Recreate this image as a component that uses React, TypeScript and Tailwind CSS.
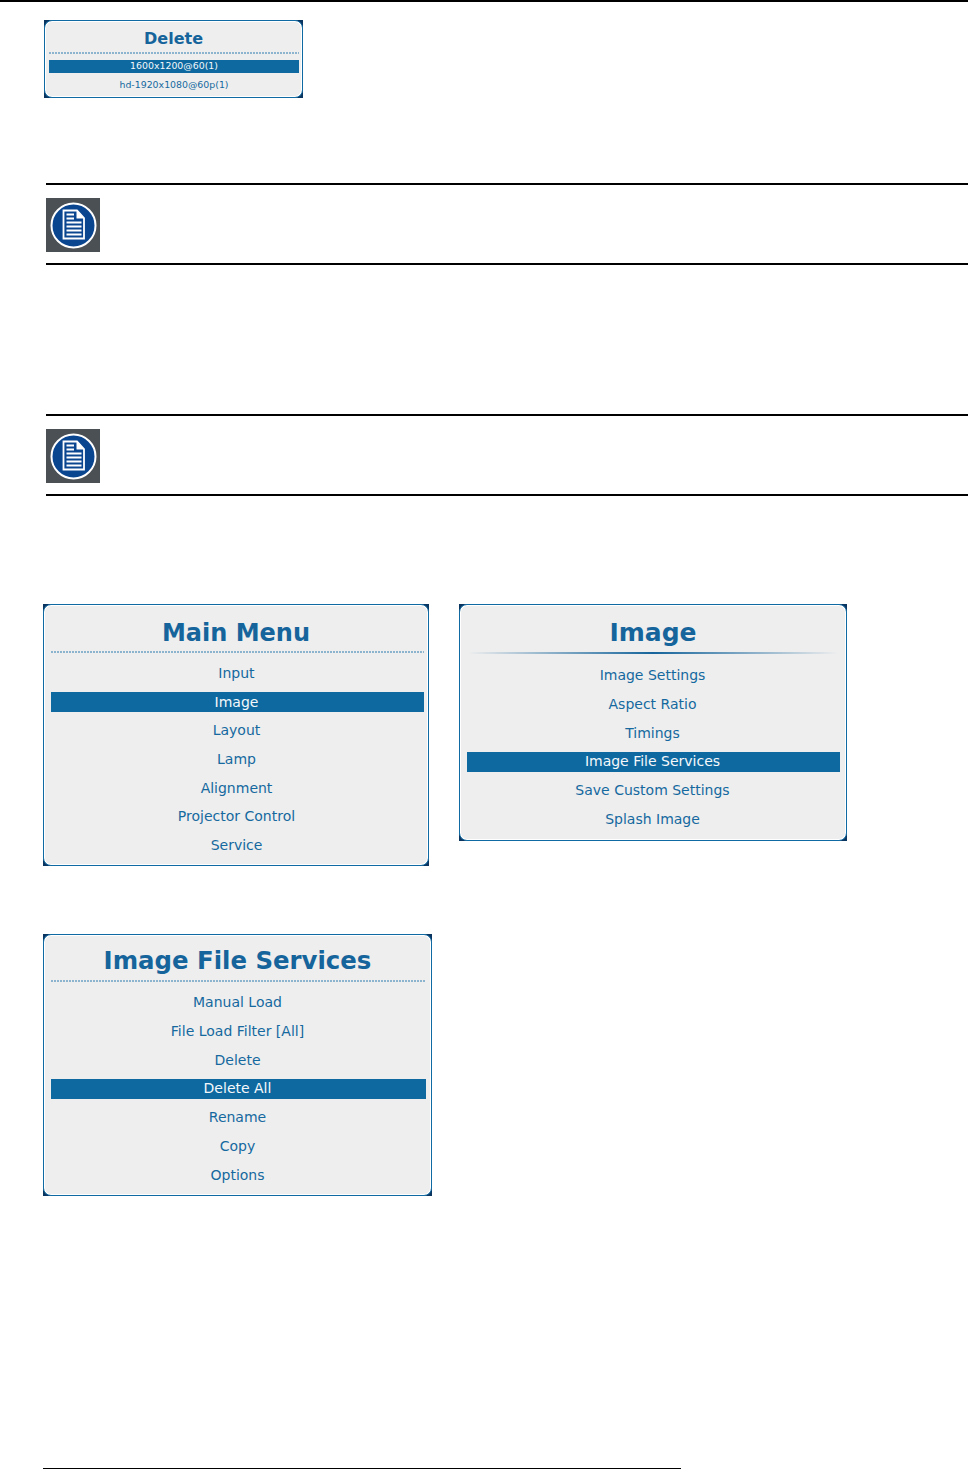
import type { ReactNode } from "react";

const FONT = "font-['DejaVu_Sans',sans-serif]";

// Note icon: grey square, blue disc, page with folded corner
function NoteIcon() {
  return (
    <svg width="54" height="54" viewBox="0 0 54 54" className="block">
      <rect width="54" height="54" fill="#4b5054" />
      <circle cx="27.5" cy="27.5" r="22" fill="#0a4590" stroke="#ffffff" strokeWidth="2" />
      <path d="M17.5 12.5H31L38 20V40.5H17.5Z" fill="none" stroke="#ffffff" strokeWidth="1.8" />
      <path d="M30.5 12V20.5H38.5Z" fill="#ffffff" />
      <path
        d="M20.5 16.5H28M20.5 20.5H28M20.5 24.5H35.5M20.5 28.5H35.5M20.5 32.5H35.5M20.5 36.5H35.5"
        stroke="#ffffff"
        strokeWidth="1.8"
        fill="none"
      />
    </svg>
  );
}

function Note({ className }: { className: string }) {
  return (
    <div className={`ml-[46px] h-[82px] border-y-2 border-black pt-[13px] ${className}`}>
      <NoteIcon />
    </div>
  );
}

// Rounded OSD panel on a dark square, corners show through
function Panel({ className, children }: { className: string; children: ReactNode }) {
  return (
    <div className={`bg-[#0a3560] ${className}`}>
      <div className="flex h-full flex-col rounded-[8px] border border-[#0f6aa3] bg-[#eeeeee] shadow-[inset_0_0_0_1px_#ffffff]">
        {children}
      </div>
    </div>
  );
}

const DOTS =
  "h-[2px] bg-[repeating-linear-gradient(90deg,#8db4cf_0_2px,transparent_2px_3px)]";

function Item({ label, selected, tall }: { label: string; selected?: boolean; tall?: boolean }) {
  return (
    <div className={`flex items-center justify-center ${tall ? "h-[28.85px]" : "h-[28.7px]"}`}>
      <div
        className={`flex h-[20px] w-full items-center justify-center pr-[2px] text-[14px] ${
          selected ? "bg-[#0e69a0] text-[#f4f8fb]" : "text-[#15699f]"
        }`}
      >
        {label}
      </div>
    </div>
  );
}

export default function App() {
  return (
    <div className={`h-[1469px] w-[968px] overflow-hidden bg-white ${FONT}`}>
      <div className="h-[2px] bg-black" />

      <Panel className="ml-[44px] mt-[18px] h-[78px] w-[259px]">
        <div className="flex h-[31px] items-end justify-center text-[16px] font-bold leading-[26px] text-[#15649b]">
          Delete
        </div>
        <div className={`ml-[4px] mr-[3px] ${DOTS}`} />
        <div className="ml-[4px] mr-[3px] mt-[3px]">
          <div className="flex h-[19px] items-center">
            <div className="flex h-[13px] w-full items-center justify-center text-[9.4px] bg-[#0e69a0] text-[#f4f8fb]">
              1600x1200@60(1)
            </div>
          </div>
          <div className="flex h-[19px] items-center justify-center text-[9.4px] text-[#15699f]">
            hd-1920x1080@60p(1)
          </div>
        </div>
      </Panel>

      <Note className="mt-[85px]" />
      <Note className="mt-[149px]" />

      <div className="ml-[43px] mt-[108px] flex items-start gap-[30px]">
        <Panel className="h-[262px] w-[386px]">
          <div className="flex h-[46px] items-end justify-center text-[24px] font-bold leading-[36px] text-[#15649b]">
            Main Menu
          </div>
          <div className={`ml-[7px] mr-[4px] ${DOTS}`} />
          <div className="ml-[7px] mr-[4px] mt-[6px]">
            <Item label="Input" />
            <Item label="Image" selected />
            <Item label="Layout" />
            <Item label="Lamp" />
            <Item label="Alignment" />
            <Item label="Projector Control" />
            <Item label="Service" />
          </div>
        </Panel>

        <Panel className="h-[237px] w-[388px]">
          <div className="flex h-[47px] items-end justify-center text-[25px] font-bold leading-[38px] text-[#15649b]">
            Image
          </div>
          <div className="mx-[8px] h-[2px] bg-gradient-to-r from-transparent via-[#15649b] to-transparent" />
          <div className="ml-[7px] mr-[6px] mt-[7px]">
            <Item tall label="Image Settings" />
            <Item tall label="Aspect Ratio" />
            <Item tall label="Timings" />
            <Item tall label="Image File Services" selected />
            <Item tall label="Save Custom Settings" />
            <Item tall label="Splash Image" />
          </div>
        </Panel>
      </div>

      <Panel className="ml-[43px] mt-[68px] h-[262px] w-[389px]">
        <div className="flex h-[45px] items-end justify-center text-[24.4px] font-bold leading-[38px] text-[#15649b]">
          Image File Services
        </div>
        <div className={`ml-[7px] mr-[5px] ${DOTS}`} />
        <div className="ml-[7px] mr-[5px] mt-[6px]">
          <Item tall label="Manual Load" />
          <Item tall label="File Load Filter [All]" />
          <Item tall label="Delete" />
          <Item tall label="Delete All" selected />
          <Item tall label="Rename" />
          <Item tall label="Copy" />
          <Item tall label="Options" />
        </div>
      </Panel>

      <div className="ml-[43px] mt-[272px] h-[2px] w-[638px] bg-black" />
    </div>
  );
}
